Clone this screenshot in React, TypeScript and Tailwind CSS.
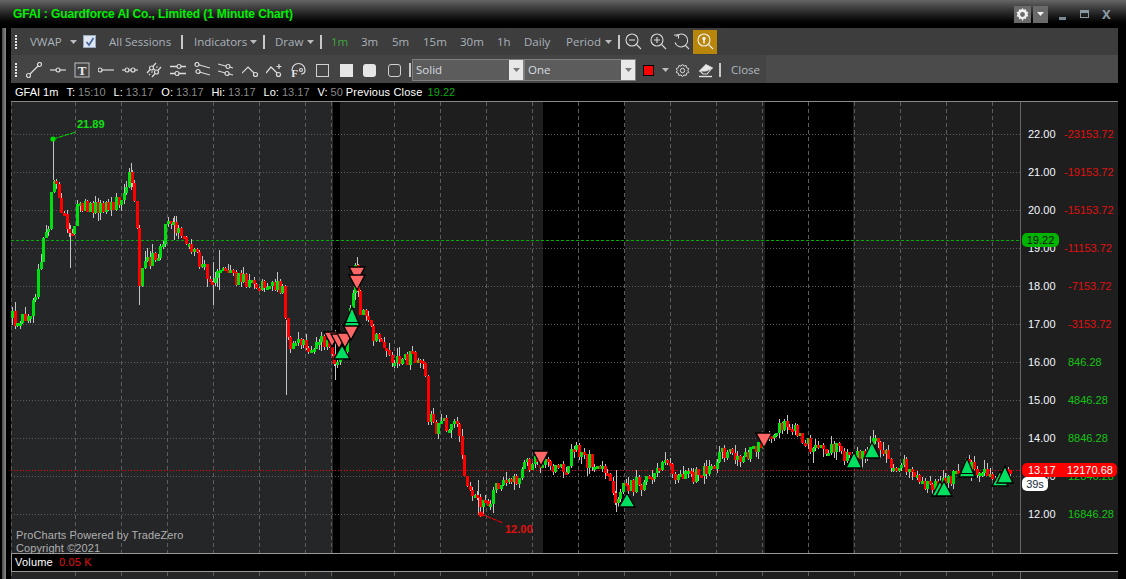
import { ReactNode } from "react";

const FONT_UI = "font-['Open_Sans',sans-serif]";
const FONT_DATA = "font-['Liberation_Sans',Arial,sans-serif]";

// rough price path read off the chart: [x, y]
const PATH: [number, number][] = [
  [12, 318], [20, 320], [30, 318], [34, 300], [38, 270], [44, 240], [50, 225], [52, 172], [56, 178], [60, 205], [65, 225],
  [70, 240], [74, 225], [78, 205], [84, 205], [90, 210], [100, 205], [110, 205], [118, 200], [125, 195], [130, 175],
  [133, 190], [136, 215], [138, 260], [139, 285], [145, 265], [155, 258], [162, 240], [168, 220], [176, 228], [186, 238],
  [195, 255], [205, 265], [213, 290], [220, 265], [228, 275], [240, 280], [250, 282], [262, 288], [275, 285], [283, 292],
  [285, 325], [290, 350], [300, 340], [310, 345], [320, 340], [330, 345], [335, 370], [345, 345], [352, 290], [356, 265],
  [360, 310], [370, 330], [378, 345], [390, 355], [400, 365], [412, 355], [425, 362], [428, 415], [435, 430], [445, 425],
  [452, 420], [460, 440], [464, 480], [475, 495], [485, 505], [495, 490], [510, 485], [520, 480], [522, 470], [530, 462],
  [545, 465], [555, 470], [568, 470], [574, 442], [585, 460], [600, 465], [610, 475], [614, 500], [620, 490], [635, 485],
  [650, 480], [665, 460], [675, 478], [690, 475], [715, 470], [720, 450], [740, 455], [755, 450], [765, 440], [775, 432],
  [790, 425], [800, 435], [815, 450], [830, 445], [850, 462], [860, 455], [875, 443], [890, 462], [905, 465], [920, 485],
  [945, 485], [955, 475], [965, 465], [985, 470], [995, 478], [1005, 472], [1013, 470],
];

const priceAt = (x: number) => {
  for (let i = 1; i < PATH.length; i++) {
    if (x <= PATH[i][0]) {
      const [x0, y0] = PATH[i - 1];
      const [x1, y1] = PATH[i];
      return y0 + ((y1 - y0) * (x - x0)) / (x1 - x0);
    }
  }
  return 470;
};

let seed = 41;
const rnd = () => {
  seed = (seed * 16807) % 2147483647;
  return seed / 2147483647;
};

// long wicks that stand out in the picture: x, top, bottom
const LONG_WICKS: [number, number, number][] = [
  [53, 139, 180], [70, 225, 268], [131, 163, 190], [139, 250, 305], [213, 262, 305], [286, 320, 395], [357, 257, 292],
  [335, 330, 380], [174, 216, 240], [219, 250, 290], [478, 480, 515], [616, 470, 512],
];

const candles = (() => {
  const out: { x: number; o: number; c: number; hi: number; lo: number }[] = [];
  let prev = 318;
  for (let x = 12; x < 1013; x += 2.6) {
    const c = Math.round(priceAt(x) + (rnd() - 0.5) * 15);
    const hi = Math.min(prev, c) - rnd() * rnd() * 11;
    const lo = Math.max(prev, c) + rnd() * rnd() * 11;
    out.push({ x: Math.round(x), o: prev, c, hi, lo });
    prev = c;
  }
  return out;
})();

const VLINES = [11, 75, 121, 167, 213, 259, 305, 331, 394, 440, 486, 532, 578, 624, 670, 716, 762, 808, 854, 900, 946, 992];
const HLINES = [134, 172, 210, 248, 286, 324, 362, 400, 438, 476, 514];

const AXIS: [string, string][] = [
  ["22.00", "-23153.72"], ["21.00", "-19153.72"], ["20.00", "-15153.72"], ["19.00", "-11153.72"], ["18.00", "-7153.72"],
  ["17.00", "-3153.72"], ["16.00", "846.28"], ["15.00", "4846.28"], ["14.00", "8846.28"], ["13.00", "12846.28"], ["12.00", "16846.28"],
];

const DOWN: [number, number][] = [[357, 267], [357, 275], [332, 332], [339, 334], [345, 333], [351, 325], [541, 451], [764, 433]];
const UP: [number, number, number][] = [
  [352, 308, 326], [342, 346, 359], [627, 494, 507], [854, 453, 468], [872, 443, 458], [967, 459, 477], [940, 482, 496],
  [944, 482, 496], [1000, 472, 486], [1005, 467, 483],
];

function Grip() {
  return (
    <div className="flex w-[3px] flex-col gap-[1px]">
      {[0, 1, 2, 3, 4].map((i) => (
        <span key={i} className="h-[2px] w-[2px] bg-[#e8e8e8]" />
      ))}
    </div>
  );
}

function Sep({ className = "" }: { className?: string }) {
  return <span className={`h-[14px] w-[2px] shrink-0 bg-[#c8c8c8] ${className}`} />;
}

function Caret({ className = "" }: { className?: string }) {
  return (
    <svg width="7" height="4" viewBox="0 0 7 4" className={`shrink-0 ${className}`}>
      <path d="M0 0h7L3.5 4z" fill="#b8bcc0" />
    </svg>
  );
}

function Ico({ children, className = "" }: { children: ReactNode; className?: string }) {
  return (
    <svg width="16" height="16" viewBox="0 0 16 16" fill="none" stroke="#dcdcdc" strokeWidth="1.2" className={`shrink-0 ${className}`}>
      {children}
    </svg>
  );
}

const node = (x: number, y: number) => <circle cx={x} cy={y} r="2" fill="#444" />;

function DrawIcons() {
  return (
    <>
      <Ico><path d="M3 13L13 3" />{node(2.5, 13.5)}{node(13.5, 2.5)}</Ico>
      <Ico className="ml-2"><path d="M0 8h16" />{node(8, 8)}</Ico>
      <Ico className="ml-2">
        <rect x="1" y="1" width="14" height="14" stroke="#aaa" />
        <text x="8" y="12.5" textAnchor="middle" fontSize="13" fontWeight="700" fontFamily="Liberation Serif" fill="#e8e8e8" stroke="none">T</text>
      </Ico>
      <Ico className="ml-2"><path d="M3 8h13" />{node(2, 8)}</Ico>
      <Ico className="ml-2"><path d="M0 8h16" />{node(5, 8)}{node(11, 8)}</Ico>
      <Ico className="ml-2"><path d="M1 11L10 1M6 15L15 5" /><path d="M3 13L13 3" strokeDasharray="1.5 2" />{node(5.5, 6)}{node(10.5, 10)}</Ico>
      <Ico className="ml-2"><path d="M0 4.5h16M0 11.5h16" strokeWidth="1.4" />{node(9, 4.5)}{node(7, 11.5)}</Ico>
      <Ico className="ml-2"><path d="M2 2l14 4M2 9l14 4" />{node(3, 2.5)}{node(4, 9.5)}</Ico>
      <Ico className="ml-2"><path d="M0 2l15 4M0 9l15 4" />{node(10, 4.5)}{node(9, 11.5)}</Ico>
      <Ico className="ml-2"><path d="M0 11l6-6 7 7" />{node(13.5, 12.5)}</Ico>
      <Ico className="ml-2"><path d="M0 11l5-6 7 7" />{node(12.5, 12.5)}<path d="M13 2v5M10.5 4.5h5" /></Ico>
      <Ico className="ml-2">
        <path d="M2 8a6.5 6.5 0 0 1 13 0c0 3-2 4-4 4" />
        <circle cx="11" cy="8" r="1.5" />
        <text x="4.5" y="15" textAnchor="middle" fontSize="11" fontWeight="700" fontFamily="Liberation Serif" fill="#e8e8e8" stroke="none">F</text>
      </Ico>
      <span className="ml-[10px] h-[13px] w-[13px] shrink-0 border border-[#d0d0d0]" />
      <span className="ml-[11px] h-[13px] w-[13px] shrink-0 bg-[#e6e6e6]" />
      <span className="ml-[10px] h-[13px] w-[13px] shrink-0 rounded-[3px] bg-[#e6e6e6]" />
      <span className="ml-[12px] h-[13px] w-[13px] shrink-0 rounded-[3px] border border-[#d0d0d0]" />
    </>
  );
}

function FakeSelect({ label }: { label: string }) {
  return (
    <div className="flex h-[22px] w-[112px] shrink-0 items-center border border-[#808080] bg-[#5c5c5c]">
      <span className="flex-1 pl-[3px] text-[11.5px] text-[#d8dce0]">{label}</span>
      <span className="flex h-[20px] w-[14px] items-center justify-center bg-[#e8e8e8]">
        <svg width="7" height="4" viewBox="0 0 7 4"><path d="M0 0h7L3.5 4z" fill="#777" /></svg>
      </span>
    </div>
  );
}

function Magnifier({ children, color = "#d8d8d8" }: { children?: ReactNode; color?: string }) {
  return (
    <svg width="17" height="17" viewBox="0 0 17 17" fill="none" stroke={color} strokeWidth="1.1" className="shrink-0">
      <circle cx="7" cy="7" r="6" />
      <path d="M11.5 11.5L16 16" />
      {children}
    </svg>
  );
}

function Toolbars() {
  return (
    <>
      <div className={`flex h-[27px] items-center bg-[#3d3d3d] pl-[4px] text-[11.5px] text-[#aab2ba] ${FONT_UI}`}>
        <Grip />
        <span className="ml-[12px] w-[40px] shrink-0">VWAP</span>
        <Caret />
        <span className="ml-[6px] flex h-[13px] w-[13px] shrink-0 items-center justify-center border border-[#9aa8c0] bg-[#dfe6f2]">
          <svg width="10" height="10" viewBox="0 0 10 10"><path d="M1.5 5l2.5 3L8.5 1" fill="none" stroke="#44669a" strokeWidth="1.7" /></svg>
        </span>
        <span className="ml-[13px] w-[72px] shrink-0">All Sessions</span>
        <Sep />
        <span className="ml-[11px] w-[56px] shrink-0">Indicators</span>
        <Caret />
        <Sep className="ml-[6px]" />
        <span className="ml-[10px] w-[32px] shrink-0">Draw</span>
        <Caret />
        <Sep className="ml-[6px]" />
        <span className="ml-[9px] w-[30px] shrink-0 text-[#3fa63f]">1m</span>
        <span className="w-[31px] shrink-0">3m</span>
        <span className="w-[31px] shrink-0">5m</span>
        <span className="w-[37px] shrink-0">15m</span>
        <span className="w-[37px] shrink-0">30m</span>
        <span className="w-[27px] shrink-0">1h</span>
        <span className="w-[42px] shrink-0">Daily</span>
        <span className="w-[39px] shrink-0">Period</span>
        <Caret />
        <Sep className="ml-[6px]" />
        <div className="ml-[5px]"><Magnifier><path d="M4 7h6" /></Magnifier></div>
        <div className="ml-[8px]"><Magnifier><path d="M4 7h6M7 4v6" /></Magnifier></div>
        <svg width="17" height="17" viewBox="0 0 17 17" fill="none" stroke="#d8d8d8" strokeWidth="1.1" className="ml-[6px] shrink-0">
          <path d="M3 3.5a6.5 6.5 0 1 1-1 6" />
          <path d="M1 2h4.5v3.5" />
          <path d="M12 12l4 4" />
        </svg>
        <div className="ml-[3px] flex h-[24px] w-[24px] shrink-0 items-center justify-center bg-[#b8860b]">
          <Magnifier color="#f0f0f0">
            <circle cx="7" cy="5.5" r="1.7" fill="#f0f0f0" stroke="none" />
            <path d="M7 6v4.5" strokeWidth="1.6" />
          </Magnifier>
        </div>
      </div>
      <div className={`h-[28px] bg-[#4b4b4b] text-[11.5px] text-[#b0b8c0] ${FONT_UI}`}>
        <div className="flex h-full w-[755px] items-center bg-[#444444] pl-[4px] pt-[2px]">
          <Grip />
          <div className="ml-[8px] flex items-center"><DrawIcons /></div>
          <Sep className="ml-[8px]" />
          <div className="ml-[1px]"><FakeSelect label="Solid" /></div>
          <FakeSelect label="One" />
          <span className="ml-[7px] h-[11px] w-[11px] shrink-0 border border-black bg-[#ff0000]" />
          <Caret className="ml-[8px]" />
          <svg width="15" height="15" viewBox="0 0 24 24" fill="none" stroke="#d8d8d8" strokeWidth="1.6" className="ml-[6px] shrink-0">
            <circle cx="12" cy="12" r="3.5" />
            <path d="M12 2l2.2 3 3.6-1 .7 3.6 3.5 1.2-1.5 3.2 1.5 3.2-3.5 1.2-.7 3.6-3.6-1L12 22l-2.2-3-3.6 1-.7-3.6L2 15.2l1.5-3.2L2 8.8l3.5-1.2.7-3.6 3.6 1z" />
          </svg>
          <svg width="16" height="16" viewBox="0 0 16 16" fill="none" stroke="#e0e0e0" strokeWidth="1.1" className="ml-[8px] shrink-0">
            <path d="M2 9l6-6 6 3-5 6H5z" />
            <path d="M2 9l6-6 6 3-6 3z" fill="#e8e8e8" />
            <path d="M1 14.5h13" strokeWidth="1.4" />
          </svg>
          <Sep className="ml-[5px]" />
          <span className="ml-[10px]">Close</span>
        </div>
      </div>
    </>
  );
}

function InfoBar() {
  const pairs: [string, string, string][] = [
    ["T:", "15:10", "ml-[8px]"], ["L:", "13.17", "ml-[8px]"], ["O:", "13.17", "ml-[8px]"], ["Hi:", "13.17", "ml-[8px]"], ["Lo:", "13.17", "ml-[8px]"], ["V:", "50", "ml-[8px]"],
  ];
  return (
    <div className={`mt-px flex h-[17px] items-center bg-black pl-[4px] text-[11px] text-white ${FONT_DATA}`}>
      <span>GFAI 1m</span>
      {pairs.map(([k, v, m]) => (
        <span key={k} className={m}>
          {k} <span className="text-[#8a8a8a]">{v}</span>
        </span>
      ))}
      <span className="ml-[3px] tracking-[0.2px]">Previous Close</span>
      <span className="ml-[5px] text-[#0fa80f]">19.22</span>
    </div>
  );
}

function Plot() {
  return (
    <svg width="1009" height="452" viewBox="11 101 1009 452" className="block shrink-0">
      <rect x="11" y="101" width="1009" height="452" fill="#1e1e1e" />
      <rect x="11" y="101" width="322" height="452" fill="#252628" />
      <rect x="333" y="101" width="7" height="452" fill="#000" />
      <rect x="543" y="101" width="82" height="452" fill="#000" />
      <rect x="765" y="101" width="88" height="452" fill="#000" />
      <path d="M11 101.5H1020" stroke="#8a8a8a" />
      {VLINES.map((x) => (
        <path key={x} d={`M${x + 0.5} 102V553`} stroke="#5c5c5c" strokeDasharray="4 3" />
      ))}
      {HLINES.map((y) => (
        <path key={y} d={`M11 ${y + 0.5}H1020`} stroke="#5c5c5c" strokeDasharray="1 2" />
      ))}
      <path d="M11 240.5H1020" stroke="#00b000" strokeDasharray="3 2" />
      <path d="M11 470.5H1020" stroke="#ff0000" strokeDasharray="1 2" />
      {candles.map((k, i) => (
        <path key={i} d={`M${k.x + 0.5} ${Math.round(k.hi)}V${Math.round(k.lo)}`} stroke="#c4c4c4" />
      ))}
      {LONG_WICKS.map(([x, t, b]) => (
        <path key={x} d={`M${x + 0.5} ${t}V${b}`} stroke="#c4c4c4" />
      ))}
      {candles.map((k, i) => (
        <rect
          key={i}
          x={k.x - 1}
          y={Math.min(k.o, k.c)}
          width="3"
          height={Math.max(Math.abs(k.o - k.c), 3)}
          fill={k.c > k.o ? "#ff0000" : "#00e010"}
        />
      ))}
      <path d="M53 139L76 132" stroke="#00e000" strokeDasharray="5 1" />
      <circle cx="53" cy="139" r="2.6" fill="#00e000" />
      <path d="M481 514L503 523" stroke="#ff0000" strokeDasharray="5 1" />
      <circle cx="481" cy="514" r="2.6" fill="#ff0000" />
      {DOWN.map(([x, y]) => (
        <path key={`${x}-${y}`} d={`M${x - 8} ${y}h16l-8 15z`} fill="#ff6666" stroke="#000" strokeWidth="1.4" />
      ))}
      {UP.map(([x, t, b]) => (
        <path key={`${x}-${t}`} d={`M${x} ${t - 1}L${x + 8} ${b}H${x - 8}z`} fill="#00e060" stroke="#000" strokeWidth="1.4" />
      ))}
      <path d="M344 322.5h16M959 473.5h16" stroke="#000" />
    </svg>
  );
}

function Axis() {
  return (
    <div className={`relative h-[452px] w-[98px] shrink-0 border-l border-t border-l-[#666] border-t-[#8a8a8a] bg-[#1e1e1e] pt-[13px] text-[11px] ${FONT_DATA}`}>
      {AXIS.map(([p, v]) => (
        <div key={p} className="flex h-[38px] items-center">
          <span className="ml-[7px] w-[36px] text-[#f4f8ff]">{p}</span>
          <span className={v.startsWith("-") ? (v.length > 8 ? "text-[#e01010]" : "ml-[4px] text-[#e01010]") : "ml-[4px] text-[#14c414]"}>{v}</span>
        </div>
      ))}
      <div className="absolute left-[1px] top-[131px] flex h-[14px] w-[37px] items-center justify-center rounded-[5px] bg-[#00b400] text-[#101010]">19.22</div>
      <div className="absolute left-[1px] top-[361px] flex h-[14px] w-[95px] items-center rounded-[5px] bg-[#ff0000] pl-[6px] text-white">
        <span className="w-[39px]">13.17</span>
        <span>12170.68</span>
      </div>
      <div className="absolute left-[1px] top-[375px] flex h-[14px] w-[26px] items-center justify-center rounded-[5px] bg-white text-[#1a2a3a]">39s</div>
    </div>
  );
}

function BottomStrip() {
  return (
    <svg width="1107" height="7" viewBox="11 572 1107 7" className="block">
      <rect x="11" y="572" width="1107" height="7" fill="#1e1e1e" />
      <rect x="11" y="572" width="322" height="7" fill="#252628" />
      {VLINES.map((x) => (
        <path key={x} d={`M${x + 0.5} 572V579`} stroke="#5c5c5c" strokeDasharray="4 3" />
      ))}
      <path d="M1020.5 572V579" stroke="#666" />
    </svg>
  );
}

export default function App() {
  return (
    <div className="flex h-[579px] w-[1126px] flex-col overflow-hidden bg-black">
      <div className="flex h-[28px] shrink-0 items-center bg-gradient-to-b from-[#666666] to-[#000000] pl-[13px] pr-[14px]">
        <span className="font-['Liberation_Sans',Arial,sans-serif] text-[12px] font-bold tracking-[-0.1px] text-[#00f000]">
          GFAI : Guardforce AI Co., Limited (1 Minute Chart)
        </span>
        <div className="ml-auto flex items-center">
          <span className="flex h-[17px] w-[17px] items-center justify-center bg-[#6a6a6a]">
            <svg width="13" height="13" viewBox="0 0 24 24" fill="#f0f0f0">
              <path fillRule="evenodd" d="M12 0l2.4 3.4 4-1.3.5 4.2 4.1 1.2-1.9 3.8 1.9 3.8-4.1 1.2-.5 4.2-4-1.3L12 24l-2.4-4.5-4 1.3-.5-4.2L1 15.4l1.9-3.8L1 7.5l4.1-1.2.5-4.2 4 1.3zM12 7.5a4.5 4.5 0 1 0 0 9 4.5 4.5 0 0 0 0-9z" />
            </svg>
          </span>
          <span className="ml-[2px] flex h-[17px] w-[15px] items-center justify-center bg-[#6a6a6a]">
            <svg width="7" height="4" viewBox="0 0 7 4"><path d="M0 0h7L3.5 4z" fill="#f0f0f0" /></svg>
          </span>
          <span className="ml-[11px] mt-[9px] h-[3px] w-[7px] bg-[#7c8894]" />
          <span className="ml-[14px] h-[8px] w-[9px] border border-t-[3px] border-[#8a98a4]" />
          <span className="ml-[13px] w-[10px] text-[13px] font-bold leading-none text-[#8a98a4]">X</span>
        </div>
      </div>
      <div className="flex min-h-0 flex-1">
        <div className="flex w-[11px] shrink-0">
          <span className="ml-[2px] h-full w-[4px] bg-gradient-to-r from-[#4a4a4a] to-[#8a8a8a]" />
        </div>
        <div className="w-[1107px] shrink-0">
          <Toolbars />
          <InfoBar />
          <div className="relative flex">
            <Plot />
            <Axis />
            <span className={`absolute left-[66px] top-[15px] text-[11px] font-bold text-[#10e010] ${FONT_DATA}`}>21.89</span>
            <span className={`absolute left-[494px] top-[420px] text-[11px] font-bold text-[#e01010] ${FONT_DATA}`}>12.00</span>
            <div className={`absolute bottom-[-2px] left-[5px] text-[11px] leading-[13px] tracking-[0.1px] text-[#b0b0b0] ${FONT_DATA}`}>
              <div>ProCharts Powered by TradeZero</div>
              <div>Copyright ©2021</div>
            </div>
          </div>
          <div className={`flex h-[19px] items-center border-y border-l border-[#999] bg-black pl-[3px] text-[11px] tracking-[0.2px] text-white ${FONT_DATA}`}>
            Volume <span className="ml-[6px] text-[#e01010]">0.05 K</span>
          </div>
          <BottomStrip />
        </div>
      </div>
    </div>
  );
}
